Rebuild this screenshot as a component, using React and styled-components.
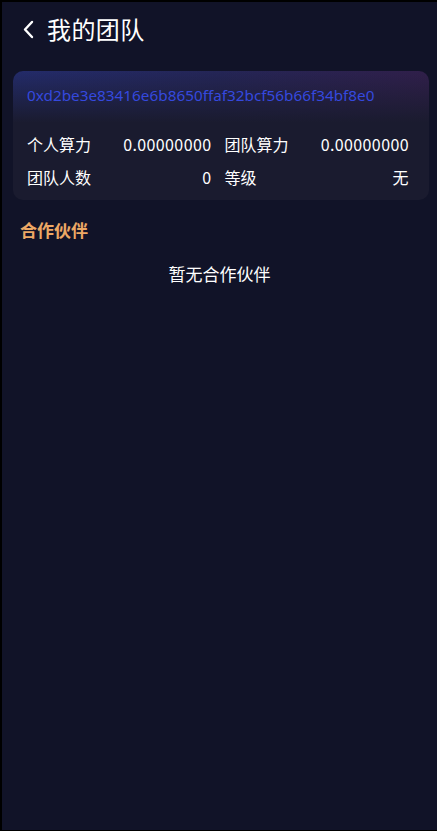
import React from 'react';
import styled, { createGlobalStyle } from 'styled-components';

const GlobalStyle = createGlobalStyle`
  html, body {
    margin: 0;
    padding: 0;
    background: #000;
  }
  body {
    font-family: "Microsoft YaHei", "Noto Sans CJK SC", "Noto Sans", sans-serif;
  }
`;

const Page = styled.div`
  box-sizing: border-box;
  height: 831px;
  background: #111328;
  border-top: 2px solid #000;
  border-left: 2px solid #000;
  border-bottom: 1px solid #000;
  color: #fff;
  overflow: hidden;
`;

const Header = styled.div`
  display: flex;
  align-items: center;
  height: 54px;
  padding: 0 0 0 18px;
  gap: 11px;
`;

const BackButton = styled.button`
  display: flex;
  align-items: center;
  justify-content: center;
  width: 16px;
  height: 20px;
  padding: 0;
  border: none;
  background: none;
  color: #fff;
`;

const Title = styled.h1`
  margin: 0 0 2px 0;
  font-size: 24px;
  font-weight: 400;
  letter-spacing: 0.4px;
`;

const Card = styled.div`
  margin: 15px 8px 0 11px;
  border-radius: 10px;
  background:
    linear-gradient(180deg, rgba(26, 27, 47, 0) 0%, #1a1b2f 40%),
    linear-gradient(90deg, #232b6a 0%, #242556 50%, #301f4a 100%);
  padding: 14px 20px 12px 14px;
`;

const Address = styled.div`
  color: #3549de;
  font-family: "Microsoft YaHei", "Noto Sans", "Liberation Sans", sans-serif;
  font-size: 15.3px;
  line-height: 20px;
  padding-bottom: 28px;
`;

const Grid = styled.div`
  display: grid;
  grid-template-columns: 1fr 1fr;
  column-gap: 13px;
  row-gap: 11px;
`;

const Stat = styled.div`
  display: flex;
  justify-content: space-between;
  align-items: center;
  font-size: 16px;
  line-height: 22px;
`;

const Value = styled.span`
  letter-spacing: 0.4px;
`;

const Section = styled.div`
  padding: 19px 0 0 18px;
  color: #eda865;
  font-size: 17px;
  font-weight: 700;
  line-height: 22px;
`;

const Empty = styled.div`
  text-align: center;
  font-size: 17px;
  line-height: 22px;
  padding-top: 22px;
`;

const stats = [
  ['个人算力', '0.00000000'],
  ['团队算力', '0.00000000'],
  ['团队人数', '0'],
  ['等级', '无'],
];

export default function App() {
  return (
    <>
      <GlobalStyle />
      <Page>
        <Header>
          <BackButton>
            <svg width="13" height="19" viewBox="0 0 13 19" fill="none">
              <path d="M10 2 L3 9.5 L10 17" stroke="#fff" strokeWidth="2.4" strokeLinecap="round" strokeLinejoin="round" />
            </svg>
          </BackButton>
          <Title>我的团队</Title>
        </Header>
        <Card>
          <Address>0xd2be3e83416e6b8650ffaf32bcf56b66f34bf8e0</Address>
          <Grid>
            {stats.map(([label, value]) => (
              <Stat key={label}>
                <span>{label}</span>
                <Value>{value}</Value>
              </Stat>
            ))}
          </Grid>
        </Card>
        <Section>合作伙伴</Section>
        <Empty>暂无合作伙伴</Empty>
      </Page>
    </>
  );
}
